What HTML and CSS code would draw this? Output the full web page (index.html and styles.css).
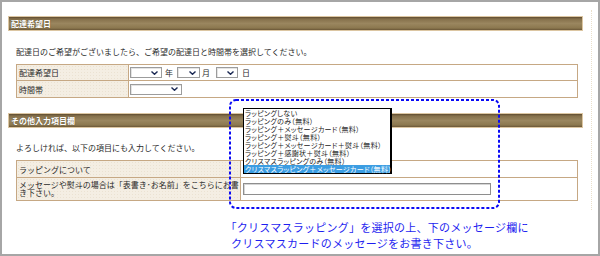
FILE: index.html
```html
<!DOCTYPE html>
<html lang="ja">
<head>
<meta charset="utf-8">
<link rel="stylesheet" href="styles.css">
</head>
<body>
<div class="frame">
  <div class="page">
    <div class="bar">配達希望日</div>
    <p class="lead">配達日のご希望がございましたら、ご希望の配達日と時間帯を選択してください。</p>
    <div class="form form-date">
      <div class="cell label r1">配達希望日</div>
      <div class="cell value r1">
        <span class="sel w32"><svg width="7" height="4" viewBox="0 0 7 4"><polyline points="0.5,0.5 3.5,3.3 6.5,0.5"/></svg></span>
        <span class="unit u-year">年</span>
        <span class="sel w23"><svg width="7" height="4" viewBox="0 0 7 4"><polyline points="0.5,0.5 3.5,3.3 6.5,0.5"/></svg></span>
        <span class="unit u-month">月</span>
        <span class="sel w22"><svg width="7" height="4" viewBox="0 0 7 4"><polyline points="0.5,0.5 3.5,3.3 6.5,0.5"/></svg></span>
        <span class="unit u-day">日</span>
      </div>
      <div class="cell label r2">時間帯</div>
      <div class="cell value r2">
        <span class="sel w52"><svg width="7" height="4" viewBox="0 0 7 4"><polyline points="0.5,0.5 3.5,3.3 6.5,0.5"/></svg></span>
      </div>
    </div>
    <div class="bar bar2">その他入力項目欄</div>
    <p class="lead lead2">よろしければ、以下の項目にも入力してください。</p>
    <div class="form form-other">
      <div class="cell label s1">ラッピングについて</div>
      <div class="cell value s1"></div>
      <div class="cell label s2 multi">メッセージや熨斗の場合は「表書き･お名前」をこちらにお書き下さい。</div>
      <div class="cell value s2"><span class="textbox"></span></div>
    </div>
  </div>
  <p class="caption"><span class="open">「</span>クリスマスラッピング」を選択の上、下のメッセージ欄に<br>クリスマスカードのメッセージをお書き下さい。</p>

  <svg class="callout" width="272" height="111" viewBox="0 0 272 111">
    <rect x="1" y="1" width="269" height="108" rx="6" ry="6"/>
  </svg>
  <ul class="listbox">
    <li>ラッピングしない</li>
    <li>ラッピングのみ（無料）</li>
    <li>ラッピング＋メッセージカード（無料）</li>
    <li>ラッピング＋熨斗（無料）</li>
    <li>ラッピング＋メッセージカード＋熨斗（無料）</li>
    <li>ラッピング＋感謝状＋熨斗（無料）</li>
    <li>クリスマスラッピングのみ（無料）</li>
    <li class="selected">クリスマスラッピング＋メッセージカード（無料）</li>
  </ul>
</div>
</body>
</html>
```
FILE: styles.css
```css
html, body {
  margin: 0;
  padding: 0;
  background: #fff;
}
body {
  font-family: "Noto Sans CJK JP", "Noto Sans", sans-serif;
}
.frame {
  position: relative;
  width: 600px;
  height: 256px;
  box-sizing: border-box;
  border: 2px solid #a6a6a6;
  background: #fff;
  overflow: hidden;
}
.page {
  margin-top: 8px;
  width: 590px;
  height: 200px;
  box-sizing: border-box;
  border-right: 1px dotted #eadfca;
  padding-top: 6px;
}
.bar {
  margin-left: 6px;
  width: 575px;
  height: 15px;
  box-sizing: border-box;
  border: 1px solid #dcc6a2;
  background: linear-gradient(to bottom, #5e4b2f 0, #85704b 2px, #9a865f 50%, #8c784f calc(100% - 2px), #6a5637 100%);
  color: #fff;
  font-size: 8px;
  font-weight: bold;
  line-height: 13px;
  padding-left: 2px;
  text-shadow: 0 0 1px #4a3a20;
}
.bar2 {
  margin-top: 15px;
}
.lead {
  margin: 15px 0 0 14px;
  font-size: 8px;
  line-height: 12px;
  color: #2a2a2a;
}
.lead2 {
  margin-top: 14px;
}
.form {
  margin: 6px 0 0 14px;
  width: 562px;
  display: grid;
  box-sizing: border-box;
  border-top: 1px solid #c6a884;
  border-left: 1px solid #c6a884;
  font-size: 8px;
  color: #2a2a2a;
}
.form-date {
  grid-template-columns: 112px 1fr;
}
.form-other {
  grid-template-columns: 224px 1fr;
}
.cell {
  box-sizing: border-box;
  border-right: 1px solid #c6a884;
  border-bottom: 1px solid #c6a884;
  display: flex;
  align-items: center;
  line-height: 9px;
}
.label {
  background-color: #f4eee3;
  background-image: radial-gradient(#ebe2d2 0.6px, transparent 0.7px);
  background-size: 3px 3px;
  padding-left: 2px;
}
.multi {
  line-height: 8px;
}
.value {
  background: #fff;
  padding-left: 1px;
}
.r1 { height: 16px; }
.r2 { height: 17px; }
.s1 { height: 17px; }
.s2 { height: 23px; }
.sel {
  display: inline-flex;
  justify-content: flex-end;
  align-items: center;
  height: 11px;
  box-sizing: border-box;
  border: 1px solid #9c9c9c;
  background: #fff;
  padding-right: 3px;
  box-shadow: inset 1px 1px 0 #e4e4e4;
}
.sel svg polyline {
  fill: none;
  stroke: #1c2a55;
  stroke-width: 1.4;
}
.w32 { width: 32px; }
.w23 { width: 23px; }
.w22 { width: 22px; }
.w52 { width: 52px; }
.unit {
  display: inline-block;
  width: 8px;
}
.u-year { margin: 0 4px 0 3px; }
.u-month { margin: 0 6px 0 2px; }
.u-day { margin-left: 4px; }
.textbox {
  display: block;
  width: 248px;
  height: 12px;
  box-sizing: border-box;
  border: 1px solid #8e8e8e;
  box-shadow: inset 1px 1px 0 #d6d6d6;
  background: #fff;
  margin-left: 1px;
}
.caption {
  margin: 9px 0 0 229px;
  font-size: 11px;
  line-height: 16px;
  letter-spacing: 0.25px;
  color: #1e1ef0;
  white-space: nowrap;
}
.caption .open {
  font-feature-settings: "halt";
}
.callout {
  position: absolute;
  left: 227px;
  top: 97px;
}
.callout rect {
  fill: none;
  stroke: #0a0af5;
  stroke-width: 2;
  stroke-dasharray: 3 2;
}
.listbox {
  position: absolute;
  left: 241px;
  top: 106px;
  width: 149px;
  height: 66px;
  box-sizing: border-box;
  margin: 0;
  padding: 0;
  list-style: none;
  border: 1px solid #000;
  border-right-width: 2px;
  border-bottom-width: 2px;
  background: #fff;
  font-size: 7px;
  line-height: 8px;
  letter-spacing: 0.3px;
  color: #222;
  font-feature-settings: "palt";
}
.listbox li {
  height: 8px;
  padding-left: 1px;
  white-space: nowrap;
}
.listbox li.selected {
  background: #3c9de2;
  color: #fff;
}
```
